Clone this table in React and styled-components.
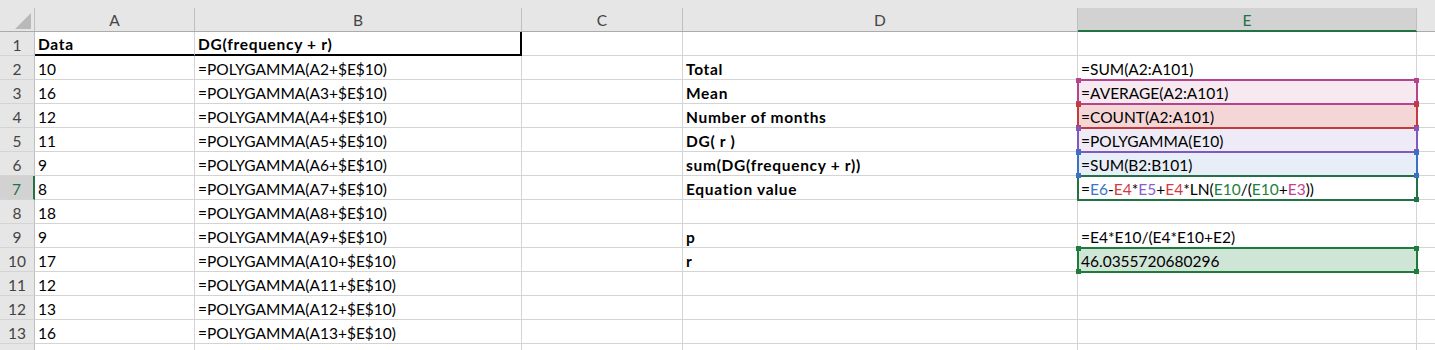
import React from 'react';
import styled, { createGlobalStyle } from 'styled-components';

const Global = createGlobalStyle`
  html, body { margin: 0; padding: 0; background: #fff; overflow: hidden; }
  body { font-family: Lato, "Liberation Sans", sans-serif; }
`;

const GREEN = '#217346';

const COLUMNS = ['A', 'B', 'C', 'D', 'E'];
const ACTIVE_COL = 'E';
const ACTIVE_ROW = 7;
const ROW_COUNT = 14;

const dataValues = [10, 16, 12, 11, 9, 8, 18, 9, 17, 12, 13, 16];

const labels = {
  2: 'Total',
  3: 'Mean',
  4: 'Number of months',
  5: 'DG( r )',
  6: 'sum(DG(frequency + r))',
  7: 'Equation value',
  9: 'p',
  10: 'r',
};

const refColors = {
  E6: '#3b74c8',
  E4: '#d23b3e',
  E5: '#8c5ccc',
  E10: '#1f7f3d',
  E3: '#bf4395',
};

// =E6-E4*E5+E4*LN(E10/(E10+E3)) with each reference tinted like its range frame
const equationParts = [
  ['='], ['E6', 'E6'], ['-'], ['E4', 'E4'], ['*'], ['E5', 'E5'], ['+'], ['E4', 'E4'],
  ['*LN('], ['E10', 'E10'], ['/('], ['E10', 'E10'], ['+'], ['E3', 'E3'], ['))'],
];

const ranges = {
  3: { color: '#b5448f', fill: '#f6e9f0', z: 5, corners: ['tl', 'tr', 'bl', 'br'] },
  4: { color: '#c23b3f', fill: '#f4d6d7', z: 4, corners: ['tl', 'tr', 'bl', 'br'] },
  5: { color: '#8159bd', fill: '#efebf6', z: 3, corners: ['tl', 'tr', 'bl', 'br'] },
  6: { color: '#3b71c4', fill: '#e8eef8', z: 2, corners: ['tl', 'tr', 'bl', 'br'] },
  7: { color: GREEN, fill: null, z: 6, corners: ['br'] },
  10: { color: '#1e7b3b', fill: '#cfe5d5', z: 6, corners: ['tl', 'tr', 'bl', 'br'] },
};

const Sheet = styled.div`
  display: grid;
  grid-template-columns: 35px 160px 327px 161px 395px 339px 1fr;
  grid-template-rows: 32px;
  grid-auto-rows: 24px;
  width: 1435px;
  font-size: 15.5px;
  color: #000;
`;

const ColHead = styled.div`
  box-sizing: border-box;
  padding-top: 8px;
  background: #e6e6e6;
  border-bottom: 1px solid ${p => (p.$active ? GREEN : '#ababab')};
`;

const HeadLabel = styled.div`
  box-sizing: border-box;
  height: 100%;
  display: flex;
  justify-content: ${p => (p.$corner ? 'flex-end' : 'center')};
  align-items: ${p => (p.$corner ? 'flex-end' : 'center')};
  padding: ${p => (p.$corner ? '0 3px 2px 0' : '0')};
  border-right: ${p => (p.$last ? 'none' : '1px solid #bfbfbf')};
  background: ${p => (p.$active ? '#d2d2d2' : 'transparent')};
  box-shadow: ${p => (p.$active ? `inset 0 -1px 0 ${GREEN}` : 'none')};
  color: ${p => (p.$active ? GREEN : '#444')};
`;

const RowHead = styled.div`
  box-sizing: border-box;
  padding-top: 3px;
  background: ${p => (p.$active ? '#d2d2d2' : '#e6e6e6')};
  color: ${p => (p.$active ? GREEN : '#444')};
  border-right: ${p => (p.$active ? `2px solid ${GREEN}` : '1px solid #bfbfbf')};
  border-bottom: 1px solid #d4d4d4;
  text-align: center;
  line-height: 20px;
  overflow: hidden;
`;

const Cell = styled.div`
  position: relative;
  box-sizing: border-box;
  padding: 3px 0 0 3px;
  white-space: nowrap;
  line-height: ${p => (p.$heavyBottom ? '19px' : '20px')};
  font-weight: ${p => (p.$bold ? 700 : 400)};
  letter-spacing: ${p => (p.$bold ? '0.7px' : 'normal')};
  background: ${p => p.$fill || 'transparent'};
  border-right: ${p => (p.$heavyRight ? '2px solid #000' : p.$edge ? 'none' : '1px solid #d4d4d4')};
  border-bottom: ${p => (p.$heavyBottom ? '2px solid #000' : '1px solid #d4d4d4')};
`;

const Frame = styled.span`
  position: absolute;
  top: -1px;
  left: -1px;
  right: -2px;
  bottom: -2px;
  pointer-events: none;
`;

const FrameLine = styled.span`
  position: absolute;
  inset: 0;
  border: 2px solid ${p => p.$color};
  z-index: ${p => p.$z};
`;

const Handle = styled.span`
  position: absolute;
  width: 5px;
  height: 5px;
  background: ${p => p.$color};
  z-index: 20;
  ${p => (p.$corner[0] === 't' ? 'top: -1px;' : 'bottom: -1px;')}
  ${p => (p.$corner[1] === 'l' ? 'left: -1px;' : 'right: -1px;')}
`;

const Ref = styled.span`
  color: ${p => p.$color};
`;

function RangeFrame({ color, z, corners }) {
  return (
    <Frame>
      <FrameLine $color={color} $z={z} />
      {corners.map(c => (
        <Handle key={c} $corner={c} $color={color} />
      ))}
    </Frame>
  );
}

function Equation() {
  return (
    <>
      {equationParts.map(([text, ref], i) =>
        ref ? (
          <Ref key={i} $color={refColors[ref]}>{text}</Ref>
        ) : (
          <span key={i}>{text}</span>
        )
      )}
    </>
  );
}

function CornerMark() {
  return (
    <svg width="16" height="16" viewBox="0 0 16 16">
      <polygon points="16,0 16,16 0,16" fill="#b9b9b9" />
    </svg>
  );
}

function columnE(row) {
  switch (row) {
    case 2: return '=SUM(A2:A101)';
    case 3: return '=AVERAGE(A2:A101)';
    case 4: return '=COUNT(A2:A101)';
    case 5: return '=POLYGAMMA(E10)';
    case 6: return '=SUM(B2:B101)';
    case 7: return <Equation />;
    case 9: return '=E4*E10/(E4*E10+E2)';
    case 10: return '46.0355720680296';
    default: return null;
  }
}

function SheetRow({ row }) {
  const isHeader = row === 1;
  const a = isHeader ? 'Data' : dataValues[row - 2];
  const b = isHeader
    ? 'DG(frequency + r)'
    : row <= 13
      ? `=POLYGAMMA(A${row}+$E$10)`
      : null;
  const range = ranges[row];
  return (
    <>
      <RowHead $active={row === ACTIVE_ROW}>{row <= 13 ? row : null}</RowHead>
      <Cell $bold={isHeader} $heavyBottom={isHeader}>{a}</Cell>
      <Cell $bold={isHeader} $heavyBottom={isHeader} $heavyRight={isHeader}>{b}</Cell>
      <Cell />
      <Cell $bold>{labels[row]}</Cell>
      <Cell $fill={range && range.fill}>
        {columnE(row)}
        {range && <RangeFrame color={range.color} z={range.z} corners={range.corners} />}
      </Cell>
      <Cell $edge />
    </>
  );
}

export default function App() {
  return (
    <>
      <Global />
      <Sheet>
        <ColHead>
          <HeadLabel $corner>
            <CornerMark />
          </HeadLabel>
        </ColHead>
        {COLUMNS.map(c => (
          <ColHead key={c} $active={c === ACTIVE_COL}>
            <HeadLabel $active={c === ACTIVE_COL}>{c}</HeadLabel>
          </ColHead>
        ))}
        <ColHead>
          <HeadLabel $last />
        </ColHead>
        {Array.from({ length: ROW_COUNT }, (_, i) => (
          <SheetRow key={i + 1} row={i + 1} />
        ))}
      </Sheet>
    </>
  );
}
